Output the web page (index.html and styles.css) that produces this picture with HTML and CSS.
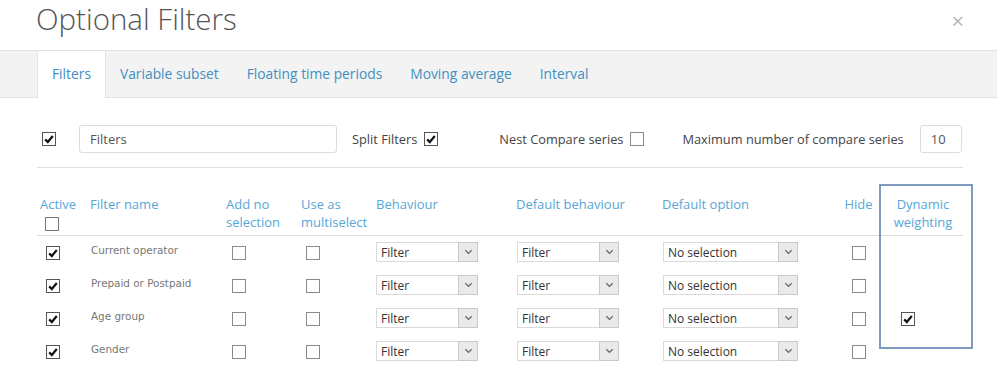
FILE: index.html
```html
<!DOCTYPE html>
<html lang="en">
<head>
  <meta charset="UTF-8" />
  <title>Optional Filters</title>
  <link rel="stylesheet" href="styles.css">
</head>
<body>
  <div class="modal">
    <header class="modal-head">
      <h1>Optional Filters</h1>
      <span class="close">&times;</span>
    </header>

    <nav class="tabs">
      <a class="tab active">Filters</a>
      <a class="tab">Variable subset</a>
      <a class="tab">Floating time periods</a>
      <a class="tab">Moving average</a>
      <a class="tab">Interval</a>
    </nav>

    <div class="toolbar">
      <span class="cb checked"><svg viewBox="0 0 12 12"><path d="M2.2 6.4 L4.8 9 L9.8 3"/></svg></span>
      <input class="text-input name-input" value="Filters" />
      <label class="opt split">Split Filters <span class="cb checked"><svg viewBox="0 0 12 12"><path d="M2.2 6.4 L4.8 9 L9.8 3"/></svg></span></label>
      <label class="opt nest">Nest Compare series <span class="cb"></span></label>
      <label class="opt max">Maximum number of compare series</label>
      <input class="text-input num-input" value="10" />
    </div>
    <div class="divider"></div>

    <div class="table-wrap">
      <table class="filters">
        <colgroup>
          <col style="width:53px"><col style="width:136px"><col style="width:75px"><col style="width:75px">
          <col style="width:140px"><col style="width:146px"><col style="width:178px"><col style="width:37px"><col style="width:86px">
        </colgroup>
        <thead>
          <tr>
            <th class="c-active">Active<span class="cb"></span></th>
            <th>Filter name</th>
            <th>Add no<br>selection</th>
            <th>Use as<br>multiselect</th>
            <th>Behaviour</th>
            <th>Default behaviour</th>
            <th>Default option</th>
            <th class="c-hide">Hide</th>
            <th class="c-dyn">Dynamic<br>weighting</th>
          </tr>
        </thead>
        <tbody>
          <tr>
            <td class="c-active"><span class="cb checked"><svg viewBox="0 0 12 12"><path d="M2.2 6.4 L4.8 9 L9.8 3"/></svg></span></td>
            <td class="name"><span>Current operator</span></td>
            <td class="c-add"><span class="cb"></span></td>
            <td class="c-multi"><span class="cb"></span></td>
            <td><div class="select sm"><span>Filter</span><i><svg viewBox="0 0 10 6"><path d="M1.5 1 L5 4.5 L8.5 1"/></svg></i></div></td>
            <td class="c-defb"><div class="select sm"><span>Filter</span><i><svg viewBox="0 0 10 6"><path d="M1.5 1 L5 4.5 L8.5 1"/></svg></i></div></td>
            <td class="c-defo"><div class="select lg"><span>No selection</span><i><svg viewBox="0 0 10 6"><path d="M1.5 1 L5 4.5 L8.5 1"/></svg></i></div></td>
            <td class="c-hide"><span class="cb"></span></td>
            <td class="c-dyn"></td>
          </tr>
          <tr>
            <td class="c-active"><span class="cb checked"><svg viewBox="0 0 12 12"><path d="M2.2 6.4 L4.8 9 L9.8 3"/></svg></span></td>
            <td class="name"><span>Prepaid or Postpaid</span></td>
            <td class="c-add"><span class="cb"></span></td>
            <td class="c-multi"><span class="cb"></span></td>
            <td><div class="select sm"><span>Filter</span><i><svg viewBox="0 0 10 6"><path d="M1.5 1 L5 4.5 L8.5 1"/></svg></i></div></td>
            <td class="c-defb"><div class="select sm"><span>Filter</span><i><svg viewBox="0 0 10 6"><path d="M1.5 1 L5 4.5 L8.5 1"/></svg></i></div></td>
            <td class="c-defo"><div class="select lg"><span>No selection</span><i><svg viewBox="0 0 10 6"><path d="M1.5 1 L5 4.5 L8.5 1"/></svg></i></div></td>
            <td class="c-hide"><span class="cb"></span></td>
            <td class="c-dyn"></td>
          </tr>
          <tr>
            <td class="c-active"><span class="cb checked"><svg viewBox="0 0 12 12"><path d="M2.2 6.4 L4.8 9 L9.8 3"/></svg></span></td>
            <td class="name"><span>Age group</span></td>
            <td class="c-add"><span class="cb"></span></td>
            <td class="c-multi"><span class="cb"></span></td>
            <td><div class="select sm"><span>Filter</span><i><svg viewBox="0 0 10 6"><path d="M1.5 1 L5 4.5 L8.5 1"/></svg></i></div></td>
            <td class="c-defb"><div class="select sm"><span>Filter</span><i><svg viewBox="0 0 10 6"><path d="M1.5 1 L5 4.5 L8.5 1"/></svg></i></div></td>
            <td class="c-defo"><div class="select lg"><span>No selection</span><i><svg viewBox="0 0 10 6"><path d="M1.5 1 L5 4.5 L8.5 1"/></svg></i></div></td>
            <td class="c-hide"><span class="cb"></span></td>
            <td class="c-dyn"><span class="cb checked"><svg viewBox="0 0 12 12"><path d="M2.2 6.4 L4.8 9 L9.8 3"/></svg></span></td>
          </tr>
          <tr>
            <td class="c-active"><span class="cb checked"><svg viewBox="0 0 12 12"><path d="M2.2 6.4 L4.8 9 L9.8 3"/></svg></span></td>
            <td class="name"><span>Gender</span></td>
            <td class="c-add"><span class="cb"></span></td>
            <td class="c-multi"><span class="cb"></span></td>
            <td><div class="select sm"><span>Filter</span><i><svg viewBox="0 0 10 6"><path d="M1.5 1 L5 4.5 L8.5 1"/></svg></i></div></td>
            <td class="c-defb"><div class="select sm"><span>Filter</span><i><svg viewBox="0 0 10 6"><path d="M1.5 1 L5 4.5 L8.5 1"/></svg></i></div></td>
            <td class="c-defo"><div class="select lg"><span>No selection</span><i><svg viewBox="0 0 10 6"><path d="M1.5 1 L5 4.5 L8.5 1"/></svg></i></div></td>
            <td class="c-hide"><span class="cb"></span></td>
            <td class="c-dyn"></td>
          </tr>
        </tbody>
      </table>
      <div class="highlight"></div>
    </div>
  </div>
</body>
</html>
```

FILE: styles.css
```css
body {
  margin: 0;
  background: #fff;
  font-family: 'Open Sans', sans-serif;
  color: #444;
  overflow: hidden;
}

.modal-head {
  height: 50px;
  display: flex;
  align-items: flex-start;
  justify-content: space-between;
}

.modal-head h1 {
  margin: 0;
  padding: 0 0 0 36px;
  font-size: 29.5px;
  font-weight: 300;
  line-height: 38px;
  color: #555;
}

.close {
  margin: 5px 36px 0 0;
  font-size: 22px;
  line-height: 30px;
  color: #b5b5b5;
}

.tabs {
  display: flex;
  height: 46px;
  padding-left: 37px;
  background: #f3f3f3;
  border-top: 1px solid #e2e2e2;
  border-bottom: 1px solid #e2e2e2;
  margin-right: 3px;
}

.tab {
  padding: 0 14px;
  font-size: 13.8px;
  line-height: 46px;
  color: #4190c0;
}

.tab.active {
  background: #fff;
  border-left: 1px solid #e2e2e2;
  border-right: 1px solid #e2e2e2;
  height: 47px;
  margin-bottom: -1px;
}

.toolbar {
  display: flex;
  align-items: center;
  padding: 27px 0 0 42px;
  font-size: 12.8px;
  color: #444;
}

.text-input {
  box-sizing: border-box;
  height: 28px;
  border: 1px solid #dcdcdc;
  border-radius: 3px;
  font-family: 'Open Sans', sans-serif;
  font-size: 13px;
  color: #555;
  padding: 0 10px;
  outline: none;
}

.name-input {
  width: 258px;
  margin-left: 23px;
}

.num-input {
  width: 42px;
  margin-left: 16px;
}

.opt {
  display: flex;
  align-items: center;
  gap: 7px;
}

.split { margin-left: 15px; }
.nest { margin-left: 61px; }
.max { margin-left: 38px; }

.divider {
  height: 1px;
  background: #dedede;
  margin: 14px 37px 0 37px;
}

/* checkboxes */
.cb {
  box-sizing: border-box;
  display: inline-block;
  width: 14px;
  height: 14px;
  border: 1px solid #8a8a8a;
  background: #fff;
  vertical-align: middle;
}

.cb.checked {
  border-color: #555;
}

.cb svg {
  display: block;
  width: 12px;
  height: 12px;
}

.cb svg path {
  fill: none;
  stroke: #111;
  stroke-width: 2.2;
}

/* table */
.table-wrap {
  position: relative;
  margin-top: 27px;
}

.filters {
  margin-left: 37px;
  width: 926px;
  table-layout: fixed;
  border-collapse: collapse;
}

.filters th {
  text-align: left;
  vertical-align: top;
  padding: 0 0 4px 0;
  font-size: 13px;
  font-weight: normal;
  line-height: 18px;
  color: #56a7d6;
  border-bottom: 1px solid #dedede;
}

.filters th.c-active {
  padding-left: 3px;
}

.filters th.c-active .cb {
  display: block;
  margin: 4px 0 0 5px;
  border-color: #777;
}

.filters th.c-hide {
  text-align: center;
}

.filters th.c-dyn {
  text-align: center;
  padding-left: 6px;
}

.filters td {
  box-sizing: border-box;
  height: 33px;
  padding: 0 0 1px 0;
  vertical-align: middle;
  line-height: 16px;
}

.filters td.c-active { padding-left: 9px; }
.filters td.c-add { padding-left: 6px; }
.filters td.c-multi { padding-left: 5px; }
.filters td.c-defb { padding-left: 1px; }
.filters td.c-defo { padding-left: 1px; }
.filters td.c-hide { text-align: center; }
.filters td.c-dyn { padding-left: 24px; }

.filters td.name {
  font-family: 'DejaVu Sans', sans-serif;
  font-size: 10.4px;
  color: #777;
  padding-left: 1px;
}

.filters td.name span {
  position: relative;
  top: -2px;
}

.select {
  box-sizing: border-box;
  display: flex;
  height: 20px;
  border: 1px solid #dadada;
  background: #fff;
  font-size: 12px;
  color: #333;
}

.select.sm { width: 102px; }
.select.lg { width: 135px; }

.select span {
  flex: 1;
  padding: 1px 0 0 4px;
  line-height: 18px;
}

.select i {
  box-sizing: border-box;
  width: 20px;
  margin: -1px -1px -1px 0;
  border: 1px solid #c9c9c9;
  background: #eaeaea;
  display: flex;
  align-items: center;
  justify-content: center;
}

.select i svg {
  width: 9px;
  height: 6px;
}

.select i svg path {
  fill: none;
  stroke: #666;
  stroke-width: 1.4;
}

.highlight {
  position: absolute;
  left: 879px;
  top: -11px;
  width: 94px;
  height: 165px;
  box-sizing: border-box;
  border: 2px solid #7d9bbf;
  pointer-events: none;
}
```
